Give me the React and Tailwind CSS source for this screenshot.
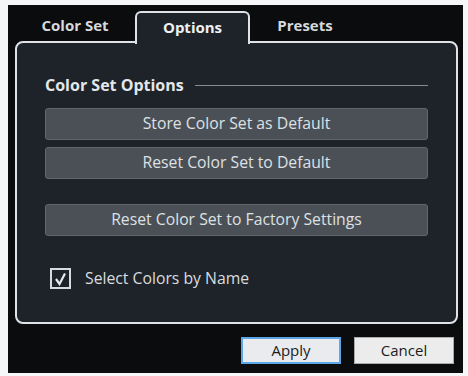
import { useState } from "react";

const tabs = [
  { id: "colorset", label: "Color Set", w: "w-[120px]" },
  { id: "options", label: "Options", w: "w-[115px]" },
  { id: "presets", label: "Presets", w: "w-[110px]" },
];

const actions = [
  { label: "Store Color Set as Default", gap: "mt-[12px]" },
  { label: "Reset Color Set to Default", gap: "mt-[7px]" },
  { label: "Reset Color Set to Factory Settings", gap: "mt-[25px]" },
];

const App = () => {
  const [active, setActive] = useState("options");
  const [byName, setByName] = useState(true);

  return (
    <div
      className="w-[468px] h-[376px] bg-[#f4f6f8] pt-[5px] pl-[8px] pr-[5px] pb-[3px]"
      style={{ fontFamily: '"Open Sans", "Noto Sans", sans-serif' }}
    >
      <div className="h-full bg-[#0b0c0e] flex flex-col">
        {/* Tabs */}
        <div className="flex pl-[7px] pt-[6px] h-[38px] relative z-10">
          {tabs.map((t) =>
            t.id === active ? (
              <button
                key={t.id}
                onClick={() => setActive(t.id)}
                className={`${t.w} h-[33px] bg-[#1e232a] border-2 border-b-0 border-[#dfe3e7] rounded-t-[6px] text-[15px] font-bold text-[#eef0f2] pb-[3px]`}
              >
                {t.label}
              </button>
            ) : (
              <button
                key={t.id}
                onClick={() => setActive(t.id)}
                className={`${t.w} h-[31px] text-[15px] font-bold text-[#d6d9dc] pb-[2px]`}
              >
                {t.label}
              </button>
            )
          )}
        </div>

        {/* Panel */}
        <div className="ml-[7px] mr-[5px] -mt-[2px] h-[283px] bg-[#1e232a] border-2 border-[#dfe3e7] rounded-[8px] pl-[28px] pr-[28px] pt-[31px]">
          <div className="flex items-center gap-[11px] h-[22px]">
            <span className="text-[16px] font-bold text-[#e4e7ea] whitespace-nowrap">
              Color Set Options
            </span>
            <div className="flex-1 h-px bg-[#868c93]" />
          </div>

          {actions.map((a) => (
            <button
              key={a.label}
              className={`${a.gap} w-full h-[32px] rounded-[3px] bg-[#4b5057] border border-[#60666d] text-[15.75px] text-[#dee1e4] flex items-center justify-center`}
            >
              {a.label}
            </button>
          ))}

          <label className="mt-[31px] ml-[5px] flex items-center gap-[14px] cursor-pointer">
            <span
              onClick={() => setByName(!byName)}
              className="w-[21px] h-[21px] border-2 border-[#d7dbdf] flex items-center justify-center"
            >
              {byName && (
                <svg width="13" height="14" viewBox="0 0 13 14">
                  <path d="M2 7 L5.5 12 L11 1.5" fill="none" stroke="#e6e9ec" strokeWidth="2.2" />
                </svg>
              )}
            </span>
            <span className="text-[15.75px] text-[#d9dcdf]">Select Colors by Name</span>
          </label>
        </div>

        {/* Footer */}
        <div className="flex justify-end gap-[13px] pt-[13px] pr-[9px]">
          <button className="w-[100px] h-[27px] bg-[#e9ebef] border-2 border-[#5aa6e6] text-[15px] text-[#1c1c1c]">
            Apply
          </button>
          <button className="w-[100px] h-[27px] bg-[#ececec] border border-[#a9abad] text-[15px] text-[#1c1c1c]">
            Cancel
          </button>
        </div>
      </div>
    </div>
  );
};

export default App;
